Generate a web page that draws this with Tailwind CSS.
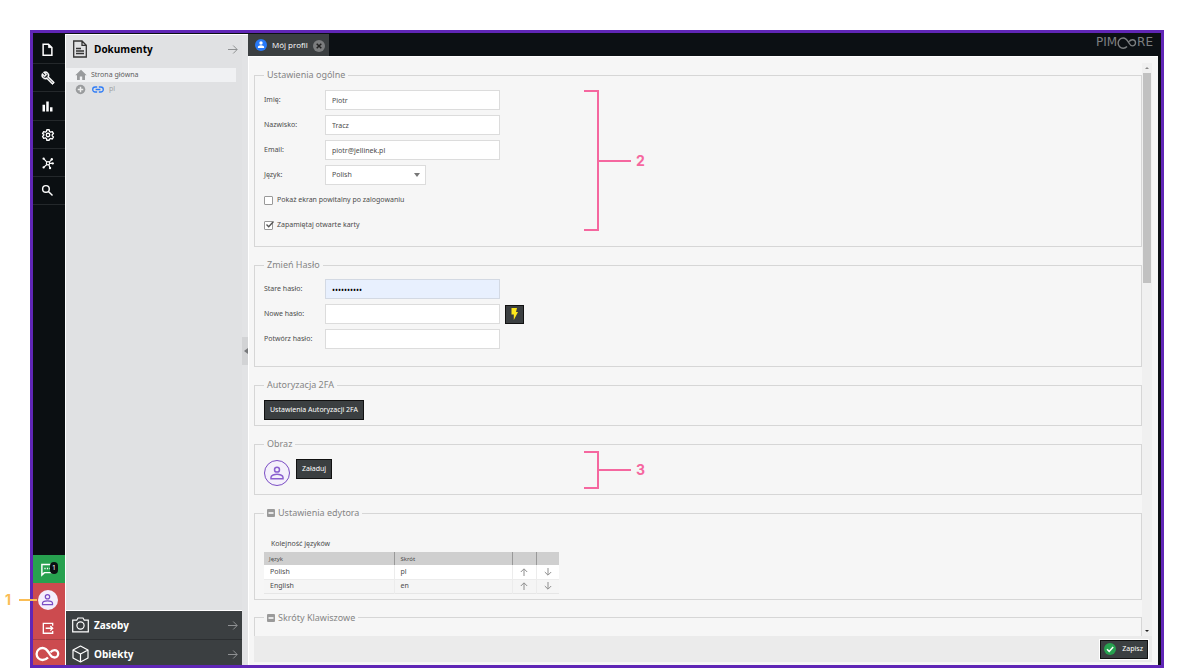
<!DOCTYPE html>
<html lang="pl">
<head>
<meta charset="utf-8">
<title>Mój profil – Pimcore</title>
<script src="https://cdn.jsdelivr.net/npm/@tailwindcss/browser@4"></script>
</head>
<body class="flex h-screen flex-col overflow-hidden bg-white px-[30px] pt-[30px] font-['Noto_Sans','Open_Sans',sans-serif] text-[7px] text-[#4c4c4c]">
<div class="flex min-h-0 flex-1 border-[3px] border-[#6026b6] bg-[#0c1014]">

  <!-- Icon bar -->
  <nav class="flex w-8 shrink-0 flex-col bg-[#0b0f12] text-white">
    <button aria-label="Plik" class="flex h-[31px] items-center justify-center border-b border-[#24282b] pt-[2px] pr-[3px]"><svg class="size-[15px]" viewBox="0 0 24 24" fill="none" stroke="currentColor" stroke-width="2.400"><path d="M5 3.500h8.500l5.500 5.500v12H5z"/><path d="M13.500 4v5h5z" fill="currentColor" stroke-width="1"/></svg></button>
    <button aria-label="Narzędzia" class="flex h-7 items-center justify-center border-b border-[#24282b] pr-[3px]"><svg class="size-[14px]" viewBox="0 0 24 24" fill="currentColor"><path d="M22.610 18.990l-9.080-9.080c.93-2.340.45-5.100-1.440-7C9.790.61 6.210.4 3.660 2.260L7.500 6.110 6.080 7.520 2.250 3.690C.39 6.230.6 9.820 2.900 12.110c1.860 1.860 4.570 2.350 6.890 1.480l9.110 9.110c.39.39 1.020.39 1.410 0l2.300-2.300c.4-.38.4-1.010 0-1.410zm-3 1.600l-9.460-9.460c-.61.45-1.290.72-2 .82-1.360.2-2.790-.21-3.830-1.250C3.370 9.760 2.930 8.500 3 7.260l3.090 3.090 4.240-4.240-3.090-3.090c1.240-.07 2.490.37 3.440 1.310 1.080 1.080 1.490 2.570 1.240 3.960-.12.71-.42 1.370-.88 1.960l9.450 9.450-.88.890z" stroke="currentColor" stroke-width=".8"/></svg></button>
    <button aria-label="Raporty" class="flex h-[29px] items-center justify-center border-b border-[#24282b] pr-[3px]"><svg class="size-[15px]" viewBox="0 0 24 24" fill="currentColor"><path d="M4 9h4v11H4zM10 4h4v16h-4zM16 13h4v7h-4z"/></svg></button>
    <button aria-label="Ustawienia" class="flex h-7 items-center justify-center border-b border-[#24282b] pr-[3px]"><svg class="size-[14px]" viewBox="0 0 24 24" fill="none" stroke="currentColor" stroke-width="2.200" stroke-linejoin="round"><path d="M10 3h4l.6 2.900 2 1.200 2.800-1 2 3.500-2.200 1.900v2.000l2.200 1.900-2 3.500-2.800-1-2 1.200L14 21h-4l-.6-2.900-2-1.200-2.800 1-2-3.500 2.200-1.900v-2.000L2.600 9.600l2-3.500 2.800 1 2-1.200z"/><circle cx="12" cy="12" r="3"/></svg></button>
    <button aria-label="Dane" class="flex h-7 items-center justify-center border-b border-[#24282b] pr-[3px]"><svg class="size-[14px]" viewBox="0 0 24 24" fill="none" stroke="currentColor" stroke-width="2"><circle cx="12" cy="12.500" r="2.800"/><path d="M10 10.500L5 5M14 10.500l4-4M10 14.500l-5 4.500M13.500 15l1.500 4.500M15 12.500h4"/><g fill="currentColor" stroke="none"><circle cx="4.500" cy="4.500" r="2"/><circle cx="18.500" cy="5.500" r="2"/><circle cx="4.500" cy="19.500" r="2"/><circle cx="15.500" cy="20.500" r="2"/><circle cx="20" cy="12.500" r="2"/></g></svg></button>
    <button aria-label="Szukaj" class="flex h-7 items-center justify-center border-b border-[#24282b] pr-[3px]"><svg class="size-[15px]" viewBox="0 0 24 24" fill="none" stroke="currentColor" stroke-width="2.300"><circle cx="9.500" cy="9.500" r="5.300"/><path d="M13.500 13.500l6.500 6.500"/></svg></button>
    <div class="flex-1"></div>
    <button aria-label="Powiadomienia" class="relative flex h-7 items-center justify-center bg-[#27a14f]"><svg class="mr-1 size-[15px]" viewBox="0 0 24 24" fill="none" stroke="currentColor" stroke-width="2.300"><path d="M3 21V4h19v13H7z"/><path d="M7 10.500h2M11 10.500h2M15 10.500h2"/></svg><span class="absolute top-[7px] left-[17px] flex h-3 w-2 items-center justify-center rounded-full bg-[#0b0f12] text-[7px] text-white">1</span></button>
    <div class="relative flex h-[33px] items-center justify-center bg-[#cc4b4f] pr-[3px]">
      <button aria-label="Mój profil" class="flex size-5 items-center justify-center rounded-full bg-[#f4edfc] text-[#7a4cc4]"><svg class="size-[15px]" viewBox="0 0 24 24" fill="none" stroke="currentColor" stroke-width="2"><circle cx="12" cy="7.500" r="3.500"/><path d="M4 20v-2c0-3 5-4 8-4s8 1 8 4v2z"/></svg></button>
      <span class="absolute top-4 -left-[14px] h-[2px] w-[18px] bg-[#fabd55]"></span>
      <span class="absolute top-[9px] -left-7 font-['Inter',sans-serif] text-[14px] leading-4 font-bold text-[#fabd55]">1</span>
    </div>
    <button aria-label="Wyloguj" class="flex h-6 items-center justify-center border-b border-[#a83e42] bg-[#cc4b4f] pr-[3px]"><svg class="size-[14px]" viewBox="0 0 24 24" fill="none" stroke="currentColor" stroke-width="2.300"><path d="M20 8V4H4v17h16v-4M8 12.500h12M16 8.500l4 4-4 4"/></svg></button>
    <button aria-label="Pimcore" class="flex h-[25px] items-center justify-center bg-[#cc4b4f] pt-[3px] pr-[2px]"><svg class="h-4 w-[26px]" viewBox="0 0 26 16" fill="none" stroke="currentColor" stroke-width="2.300"><path d="M13 11.500C11.500 13.200 9.700 14 7.600 14a6 6 0 1 1 0-12c3.900 0 5.600 3.500 7.400 6.500 1 1.700 2.300 3 4.500 3a3.700 3.700 0 1 0 0-7.400c-2 0-3.200 1-4 2.200"/></svg></button>
  </nav>

  <!-- Document tree -->
  <aside class="mt-px flex w-[177px] shrink-0 flex-col border-t border-l border-white bg-[#e0e1e3] font-['Open_Sans',sans-serif]">
    <header class="flex h-7 items-center pr-1 pl-[6px]">
      <svg class="h-[18px] w-4 shrink-0 text-[#333]" viewBox="0 0 16 18" fill="none" stroke="currentColor" stroke-width="1.300"><path d="M1.700 1h8.300l4.300 4.300V17H1.700zM10 1v4.300h4.300M4 8.500h5M4 11h8M4 13.500h8"/></svg>
      <h2 class="ml-[6px] flex-1 text-[10px] font-bold text-black">Dokumenty</h2>
      <svg class="h-[9px] w-[10px] text-[#8f9193]" viewBox="0 0 10 9" fill="none" stroke="currentColor"><path d="M0 4.500h9M5.200.5l4 4-4 4"/></svg>
    </header>
    <ul class="mt-[5px] font-['Noto_Sans',sans-serif] text-[7px] leading-[14px]">
      <li class="mr-[6px] flex h-[14px] items-center bg-[#f0f1f3] pl-[9px] text-[#606060]"><svg class="mr-1 size-3" viewBox="0 0 12 12" fill="#999b9d"><path d="M6 .8L.3 6.200h1.700V11h2.800V7.500h2.400V11H10V6.200h1.700z"/></svg>Strona główna</li>
      <li class="flex h-[14px] items-center pl-[9px] text-[#a0a1a3]"><svg class="mr-[6px] size-[11px]" viewBox="0 0 12 12"><circle cx="6" cy="6" r="5.200" fill="#999b9d"/><path d="M6 3v6M3 6h6" stroke="#eee" stroke-width="1.600"/></svg><svg class="mr-[5px] h-[7px] w-3" viewBox="0 0 12 7" fill="none" stroke="#2f7cf6" stroke-width="1.300"><path d="M5.200 1H3.200a2.500 2.500 0 0 0 0 5h2M6.800 1h2a2.500 2.500 0 0 1 0 5h-2M3.600 3.500h4.800"/></svg>pl</li>
    </ul>
    <div class="flex-1"></div>
    <button class="flex h-[30px] items-center border-t border-b border-t-white border-b-[#2c2f31] bg-[#3b3f41] pr-1 pl-[6px] text-[10px] font-bold text-white"><svg class="mr-[5px] h-4 w-[17px]" viewBox="0 0 17 16" fill="none" stroke="currentColor" stroke-width="1.200"><path d="M.7 3.200h4L6 1h5l1.300 2.200h4v11.600H.7z"/><circle cx="8.500" cy="8.500" r="3.600"/></svg><span class="flex-1 text-left">Zasoby</span><svg class="h-[9px] w-[10px] text-[#8f9193]" viewBox="0 0 10 9" fill="none" stroke="currentColor"><path d="M0 4.500h9M5.200.5l4 4-4 4"/></svg></button>
    <button class="flex h-[25px] items-center bg-[#3b3f41] pt-[3px] pr-1 pl-[6px] text-[10px] font-bold text-white"><svg class="mr-[5px] h-[18px] w-[17px]" viewBox="0 0 17 18" fill="none" stroke="currentColor" stroke-width="1.200" stroke-linejoin="round"><path d="M8.500 1l7.500 4v8l-7.500 4L1 13V5zM1 5l7.500 4L16 5M8.500 9v8"/></svg><span class="flex-1 text-left">Obiekty</span><svg class="h-[9px] w-[10px] text-[#8f9193]" viewBox="0 0 10 9" fill="none" stroke="currentColor"><path d="M0 4.500h9M5.200.5l4 4-4 4"/></svg></button>
  </aside>

  <!-- Splitter -->
  <div class="mt-px flex w-[6px] shrink-0 flex-col justify-center border-t border-white bg-[#e2e3e5]">
    <button aria-label="Zwiń panel" class="mt-[2px] flex h-7 items-center justify-end bg-[#d2d3d5]"><svg class="h-[6px] w-1" viewBox="0 0 4 6" fill="#77797b"><path d="M4 0v6L0 3z"/></svg></button>
  </div>

  <!-- Workspace -->
  <main class="mr-[3px] flex min-w-0 flex-1 flex-col">
    <header class="flex h-[23px] shrink-0 items-start justify-between">
      <div class="mt-px flex h-[22px] items-center bg-[#3b3f41] pr-1 pl-[7px] font-['Open_Sans',sans-serif] text-[8px] font-medium text-white">
        <svg class="mr-[5px] size-3" viewBox="0 0 12 12"><circle cx="6" cy="6" r="6" fill="#2879f7"/><circle cx="6" cy="4" r="1.700" fill="#fff"/><path d="M2.900 9V8c0-1 1.700-1.700 3.100-1.700S9.100 7 9.100 8v1z" fill="#fff"/></svg>
        <span>Mój profil</span>
        <button aria-label="Zamknij" class="mt-[2px] ml-[5px]"><svg class="size-3" viewBox="0 0 12 12"><circle cx="6" cy="6" r="6" fill="#7b7d7e"/><path d="M3.700 3.700l4.600 4.600M8.300 3.700L3.700 8.300" stroke="#222" stroke-width="1.500"/></svg></button>
      </div>
      <div class="mt-[3px] mr-[5px] flex h-3 items-center font-['DejaVu_Sans',sans-serif] text-[12px] leading-3 text-[#7c7f81]" aria-label="Pimcore">
        <span>PIM</span>
        <svg class="mt-px h-3 w-5" viewBox="0 0 20 12" fill="none" stroke="currentColor" stroke-width="1.400"><path d="M10 9.500C9 10.600 7.800 11.200 6.200 11.200a5 5 0 1 1 0-10.200c3 0 4.300 2.500 5.600 4.700.9 1.500 1.600 3.200 3.600 3.200a3 3 0 0 0 0-6.200c-1.500 0-2.600 1-3.200 2"/></svg>
        <span>RE</span>
      </div>
    </header>

    <div class="flex min-h-0 flex-1 flex-col border-t border-l border-white bg-[#f6f6f6] pr-[6px] pb-[3px] pl-[5px]">
      <div class="flex min-h-0 flex-1">
        <form class="flex min-w-0 flex-1 flex-col gap-[10px] overflow-hidden pt-[10px]">

          <fieldset class="shrink-0 border border-[#d6d6d6] pt-[7px] pb-[11px] pl-[9px]">
            <legend class="px-[3px] text-[9px] leading-4 text-[#858585]">Ustawienia ogólne</legend>
            <div class="relative flex flex-col gap-[5px]">
              <div class="flex h-5 items-center"><label for="f1" class="w-[61px]">Imię:</label><input id="f1" value="Piotr" class="h-5 w-[175px] border border-[#dcdcdc] bg-white px-[6px]"></div>
              <div class="flex h-5 items-center"><label for="f2" class="w-[61px]">Nazwisko:</label><input id="f2" value="Tracz" class="h-5 w-[175px] border border-[#dcdcdc] bg-white px-[6px]"></div>
              <div class="flex h-5 items-center"><label for="f3" class="w-[61px]">Email:</label><input id="f3" value="piotr@jellinek.pl" class="h-5 w-[175px] border border-[#dcdcdc] bg-white px-[6px]"></div>
              <div class="flex h-5 items-center"><label for="f4" class="w-[61px]">Język:</label>
                <div class="relative"><select id="f4" class="block h-5 w-[101px] appearance-none border border-[#dcdcdc] bg-white px-[6px]"><option>Polish</option></select><svg class="pointer-events-none absolute top-2 right-[6px] h-1 w-[6px]" viewBox="0 0 6 4" fill="#777"><path d="M0 0h6L3 4z"/></svg></div></div>
              <div class="flex h-5 items-center gap-1"><input id="f5" type="checkbox" class="size-[9px] appearance-none rounded-[1px] border border-[#999] bg-white"><label for="f5">Pokaż ekran powitalny po zalogowaniu</label></div>
              <div class="relative flex h-5 items-center gap-1"><input id="f6" type="checkbox" checked class="size-[9px] appearance-none rounded-[1px] border border-[#999] bg-white"><svg class="pointer-events-none absolute top-[5px] left-[1px] size-[9px]" viewBox="0 0 9 9" fill="none" stroke="#555" stroke-width="1.400"><path d="M1.500 4.500l2.200 2.200L8.500 1.500"/></svg><label for="f6">Zapamiętaj otwarte karty</label></div>
              <div class="absolute top-0 left-[320px] flex h-[141px] items-center">
                <span class="h-full w-[15px] border-2 border-l-0 border-[#f5679f]"></span><span class="h-[2px] w-8 bg-[#f5679f]"></span><span class="ml-[5px] font-['Inter',sans-serif] text-[14px] leading-4 font-bold text-[#f5679f]">2</span>
              </div>
            </div>
          </fieldset>

          <fieldset class="shrink-0 border border-[#d6d6d6] pt-[6px] pb-[17px] pl-[9px]">
            <legend class="px-[3px] text-[9px] leading-4 text-[#858585]">Zmień Hasło</legend>
            <div class="flex flex-col gap-[5px]">
              <div class="flex h-5 items-center"><label for="p1" class="w-[61px]">Stare hasło:</label><input id="p1" type="password" value="haslohaslo" class="h-5 w-[175px] border border-[#d3d9e3] bg-[#e8f0fe] px-[6px] text-[8px] text-black"></div>
              <div class="flex h-5 items-center"><label for="p2" class="w-[61px]">Nowe hasło:</label><input id="p2" type="password" class="h-5 w-[175px] border border-[#dcdcdc] bg-white px-[6px]"><button type="button" aria-label="Generuj hasło" class="ml-[5px] flex size-[19px] items-center justify-center border border-[#111] bg-[#3b3f41]"><svg class="h-3 w-[7px]" viewBox="0 0 7 12" fill="#fde71c"><path d="M.5 0h5.500L5 4h2L2.800 12V6.500H.5z"/></svg></button></div>
              <div class="flex h-5 items-center"><label for="p3" class="w-[61px]">Potwórz hasło:</label><input id="p3" type="password" class="h-5 w-[175px] border border-[#dcdcdc] bg-white px-[6px]"></div>
            </div>
          </fieldset>

          <fieldset class="shrink-0 border border-[#d6d6d6] pt-[7px] pb-[5px] pl-[9px]">
            <legend class="px-[3px] text-[9px] leading-4 text-[#858585]">Autoryzacja 2FA</legend>
            <button type="button" class="block h-5 border border-[#111] bg-[#3b3f41] px-[5px] text-white">Ustawienia Autoryzacji 2FA</button>
          </fieldset>

          <fieldset class="shrink-0 border border-[#d6d6d6] pt-[7px] pb-2 pl-[9px]">
            <legend class="px-[3px] text-[9px] leading-4 text-[#858585]">Obraz</legend>
            <div class="relative flex h-[27px] items-start gap-[6px]">
              <span class="mt-px flex size-[26px] items-center justify-center rounded-full border border-[#7a4cc4] bg-[#f4f0fb] text-[#8a5fcf]"><svg class="size-[18px]" viewBox="0 0 24 24" fill="none" stroke="currentColor" stroke-width="2"><circle cx="12" cy="7.500" r="3.300"/><path d="M4 19.500v-2c0-2.500 5-3.700 8-3.700s8 1.200 8 3.700v2z"/></svg></span>
              <button type="button" class="h-5 border border-[#111] bg-[#3b3f41] px-[5px] text-white">Załaduj</button>
              <div class="absolute -top-2 left-[320px] flex h-[38px] items-center">
                <span class="h-full w-[15px] border-2 border-l-0 border-[#f5679f]"></span><span class="h-[2px] w-8 bg-[#f5679f]"></span><span class="ml-[5px] font-['Inter',sans-serif] text-[14px] leading-4 font-bold text-[#f5679f]">3</span>
              </div>
            </div>
          </fieldset>

          <fieldset class="shrink-0 border border-[#d6d6d6] pt-[17px] pb-[5px] pl-[9px]">
            <legend class="px-[3px] text-[9px] leading-4 text-[#858585]"><span class="flex items-center gap-[3px]"><svg class="size-2" viewBox="0 0 8 8"><rect width="8" height="8" rx="1" fill="#9a9a9a"/><path d="M1.500 4h5" stroke="#fff" stroke-width="1.500"/></svg>Ustawienia edytora</span></legend>
            <table class="w-[295px] table-fixed border-collapse text-left leading-3">
              <caption class="h-[14px] pl-[7px] text-left leading-[11px]">Kolejność języków</caption>
              <colgroup><col class="w-[130px]"><col class="w-[118px]"><col class="w-6"><col class="w-[23px]"></colgroup>
              <thead><tr class="h-[13px] bg-[#cfcfcf] text-[6px]"><th class="border-r border-[#999] pl-[5px] font-normal">Język</th><th class="border-r border-[#999] pl-[6px] font-normal">Skrót</th><th class="border-r border-[#999]"></th><th></th></tr></thead>
              <tbody>
                <tr class="h-[14px] border-b border-[#ececec] bg-white"><td class="border-r border-[#ececec] pl-[6px]">Polish</td><td class="border-r border-[#ececec] pl-[6px]">pl</td><td class="border-r border-[#ececec]"><svg class="mx-auto size-2" viewBox="0 0 8 8" fill="none" stroke="#8e8e8e"><path d="M4 8V1M.8 4L4 .8 7.200 4"/></svg></td><td><svg class="mx-auto size-2" viewBox="0 0 8 8" fill="none" stroke="#8e8e8e"><path d="M4 0v7M.8 4L4 7.200 7.200 4"/></svg></td></tr>
                <tr class="h-[14px] border-b border-[#e6e6e6] bg-[#f5f5f5]"><td class="border-r border-[#ececec] pl-[6px]">English</td><td class="border-r border-[#ececec] pl-[6px]">en</td><td class="border-r border-[#ececec]"><svg class="mx-auto size-2" viewBox="0 0 8 8" fill="none" stroke="#8e8e8e"><path d="M4 8V1M.8 4L4 .8 7.200 4"/></svg></td><td><svg class="mx-auto size-2" viewBox="0 0 8 8" fill="none" stroke="#8e8e8e"><path d="M4 0v7M.8 4L4 7.200 7.200 4"/></svg></td></tr>
              </tbody>
            </table>
          </fieldset>

          <fieldset class="h-16 shrink-0 border border-[#d6d6d6] pl-[9px]">
            <legend class="px-[3px] text-[9px] leading-4 text-[#858585]"><span class="flex items-center gap-[3px]"><svg class="size-2" viewBox="0 0 8 8"><rect width="8" height="8" rx="1" fill="#9a9a9a"/><path d="M1.500 4h5" stroke="#fff" stroke-width="1.500"/></svg>Skróty Klawiszowe</span></legend>
          </fieldset>
        </form>

        <!-- Scrollbar -->
        <div class="mt-[6px] flex w-[10px] shrink-0 flex-col items-center bg-[#f0f0f0]">
          <svg class="my-1 h-[2px] w-1" viewBox="0 0 4 2" fill="#888"><path d="M0 2h4L2 0z"/></svg>
          <span class="h-[210px] w-2 bg-[#c1c1c1]"></span>
          <span class="flex-1"></span>
          <svg class="my-1 h-[2px] w-1" viewBox="0 0 4 2" fill="#222"><path d="M0 0h4L2 2z"/></svg>
        </div>
      </div>
      <footer class="flex h-[26px] shrink-0 items-center justify-end bg-[#ebebeb] pr-1">
        <button class="flex h-[19px] items-center border border-[#111] bg-[#3b3f41] pr-1 pl-[3px] text-white outline outline-white"><svg class="mr-[6px] size-3" viewBox="0 0 12 12"><circle cx="6" cy="6" r="6" fill="#27a14f"/><path d="M3 6.200l2.200 2.200L9.200 4" stroke="#fff" stroke-width="1.500" fill="none"/></svg>Zapisz</button>
      </footer>
    </div>
  </main>
</div>
</body>
</html>
